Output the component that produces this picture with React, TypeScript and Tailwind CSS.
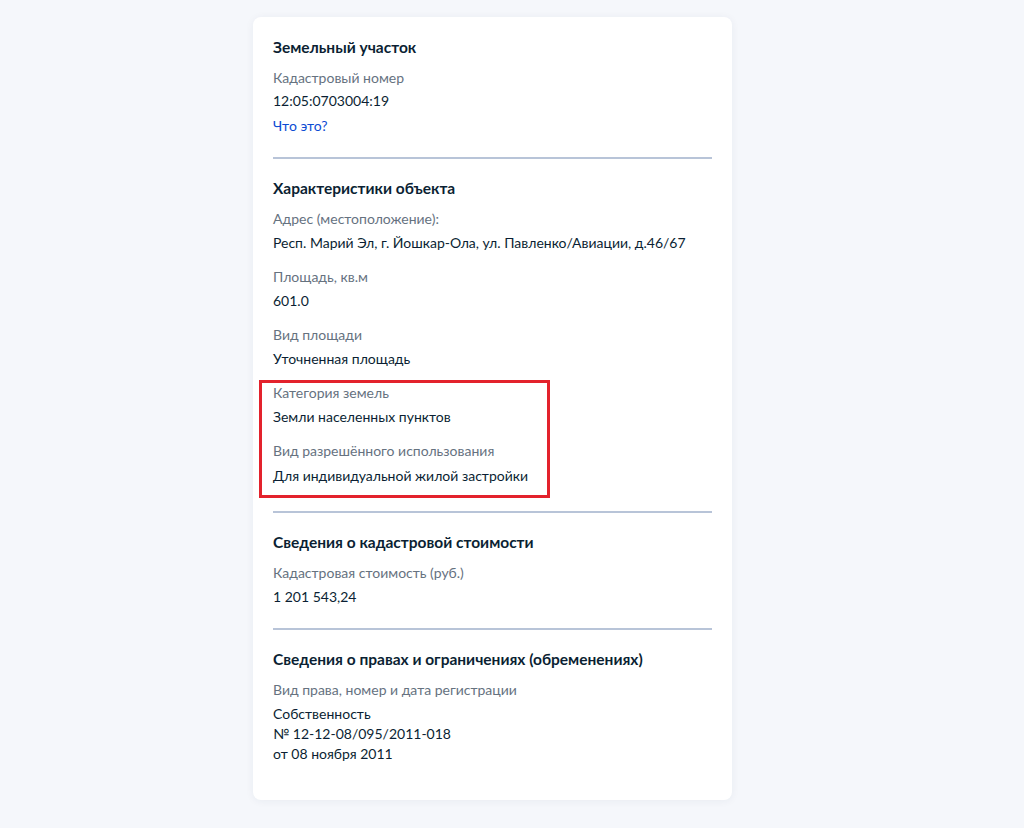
import React from "react";

const Label = ({ children, className = "" }: { children: React.ReactNode; className?: string }) => (
  <div className={`text-[14px] leading-[20px] text-[#66727f] ${className}`}>{children}</div>
);
const Value = ({ children, className = "" }: { children: React.ReactNode; className?: string }) => (
  <div className={`text-[14px] leading-[20px] text-[#0b1f33] ${className}`}>{children}</div>
);
const Title = ({ children }: { children: React.ReactNode }) => (
  <div className="text-[15.5px] leading-[24px] font-bold text-[#0b1f33]">{children}</div>
);
const Divider = () => <div className="h-[2px] bg-[#b8c4d8]" />;

export default function App() {
  return (
    <div
      className="min-h-[828px] w-full bg-[#f5f7fb] pl-[253px] pt-[17px] pb-[28px]"
      style={{ fontFamily: "Lato, 'Noto Sans', sans-serif" }}
    >
      <div className="w-[479px] rounded-[8px] bg-white px-[20px] pb-[36px] shadow-[0_1px_8px_rgba(30,50,90,0.06)]">
        <section className="pt-[18px] pb-[21px]">
          <Title>Земельный участок</Title>
          <Label className="mt-[9px]">Кадастровый номер</Label>
          <Value className="mt-[3px]">12:05:0703004:19</Value>
          <div className="mt-[5px] text-[14px] leading-[20px] text-[#0d4cd3]">Что это?</div>
        </section>
        <Divider />
        <section className="pt-[17px] pb-[25px]">
          <Title>Характеристики объекта</Title>
          <Label className="mt-[9px]">Адрес (местоположение):</Label>
          <Value className="mt-[4px]">Респ. Марий Эл, г. Йошкар-Ола, ул. Павленко/Авиации, д.46/67</Value>
          <Label className="mt-[14px]">Площадь, кв.м</Label>
          <Value className="mt-[4px]">601.0</Value>
          <Label className="mt-[14px]">Вид площади</Label>
          <Value className="mt-[4px]">Уточненная площадь</Value>
          <div className="relative mt-[14px]">
            <div className="pointer-events-none absolute left-[-14px] top-[-3px] h-[118px] w-[291px] border-[3px] border-[#e3222c]" />
            <Label>Категория земель</Label>
            <Value className="mt-[4px]">Земли населенных пунктов</Value>
            <Label className="mt-[14px]">Вид разрешённого использования</Label>
            <Value className="mt-[5px]">Для индивидуальной жилой застройки</Value>
          </div>
        </section>
        <Divider />
        <section className="pt-[17px] pb-[21px]">
          <Title>Сведения о кадастровой стоимости</Title>
          <Label className="mt-[9px]">Кадастровая стоимость (руб.)</Label>
          <Value className="mt-[4px]">1 201 543,24</Value>
        </section>
        <Divider />
        <section className="pt-[17px]">
          <Title>Сведения о правах и ограничениях (обременениях)</Title>
          <Label className="mt-[9px]">Вид права, номер и дата регистрации</Label>
          <Value className="mt-[4px]">Собственность</Value>
          <Value>№ 12-12-08/095/2011-018</Value>
          <Value>от 08 ноября 2011</Value>
        </section>
      </div>
    </div>
  );
}
